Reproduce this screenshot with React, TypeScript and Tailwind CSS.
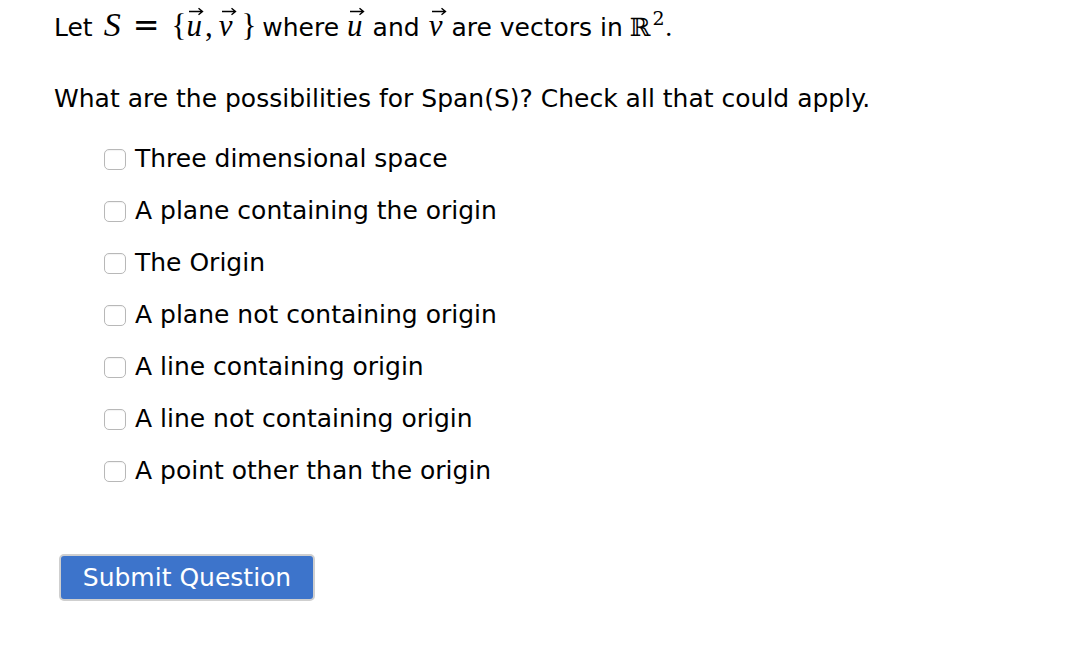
import React from "react";

const options = [
  "Three dimensional space",
  "A plane containing the origin",
  "The Origin",
  "A plane not containing origin",
  "A line containing origin",
  "A line not containing origin",
  "A point other than the origin",
];

function Vec({ ch, className }: { ch: string; className?: string }) {
  return (
    <span className={"relative inline-block " + (className ?? "")}>
      <span className="italic">{ch}</span>
      <svg className="absolute left-[2px] top-[-1px]" width="16" height="9" viewBox="0 0 16 9">
        <path d="M1 4.5 H14 M10.5 1.2 L14.5 4.5 L10.5 7.8" stroke="#000" strokeWidth="1.4" fill="none" />
      </svg>
    </span>
  );
}

export default function App() {
  return (
    <div
      className="w-[1088px] h-[658px] bg-white text-black pl-[54px] pt-[7px]"
      style={{ fontFamily: '"DejaVu Sans", sans-serif' }}
    >
      <div className="text-[25px] leading-[36px] flex items-baseline whitespace-pre">
        <span>Let</span>
        <span className="flex items-baseline font-['Liberation_Serif',serif] text-[31px]">
          <span className="italic text-[34px] ml-[11px]">S</span>
          <span className="font-['DejaVu_Sans',sans-serif] text-[32px] ml-[12px]">=</span>
          <span className="ml-[12px]">{"{"}</span>
          <Vec ch="u" />
          <span className="ml-[3px]">,</span>
          <Vec ch="v" className="ml-[6px]" />
          <span className="ml-[9px]">{"}"}</span>
        </span>
        <span className="ml-[6px]">where</span>
        <span className="font-['Liberation_Serif',serif] text-[31px] ml-[8px]"><Vec ch="u" /></span>
        <span className="ml-[10px]">and</span>
        <span className="font-['Liberation_Serif',serif] text-[31px] ml-[9px]"><Vec ch="v" /></span>
        <span className="ml-[9px]">are vectors in</span>
        <span className="font-['DejaVu_Serif',serif] text-[25px] ml-[7px]">
          ℝ<span className="inline-block text-[19px] relative top-[-11px] ml-[2px]">2</span>.
        </span>
      </div>
      <div className="text-[25px] leading-[36px] mt-[34px]">
        What are the possibilities for Span(S)? Check all that could apply.
      </div>
      <div className="flex flex-col pl-[50px] mt-[24px] gap-[16px]">
        {options.map((o) => (
          <label key={o} className="flex items-center gap-[9px] text-[25px] leading-[36px]">
            <span className="w-[22px] h-[21px] rounded-[5px] border border-[#b8b8b8] bg-white shadow-[inset_0_1px_1px_rgba(0,0,0,0.05)]" />
            <span>{o}</span>
          </label>
        ))}
      </div>
      <button
        className="mt-[65px] ml-[5px] w-[256px] h-[47px] rounded-[5px] border-2 border-[#cfcfcf] bg-[#3d74cb] text-white text-[25px]"
        style={{ fontFamily: '"DejaVu Sans", sans-serif' }}
      >
        Submit Question
      </button>
    </div>
  );
}
